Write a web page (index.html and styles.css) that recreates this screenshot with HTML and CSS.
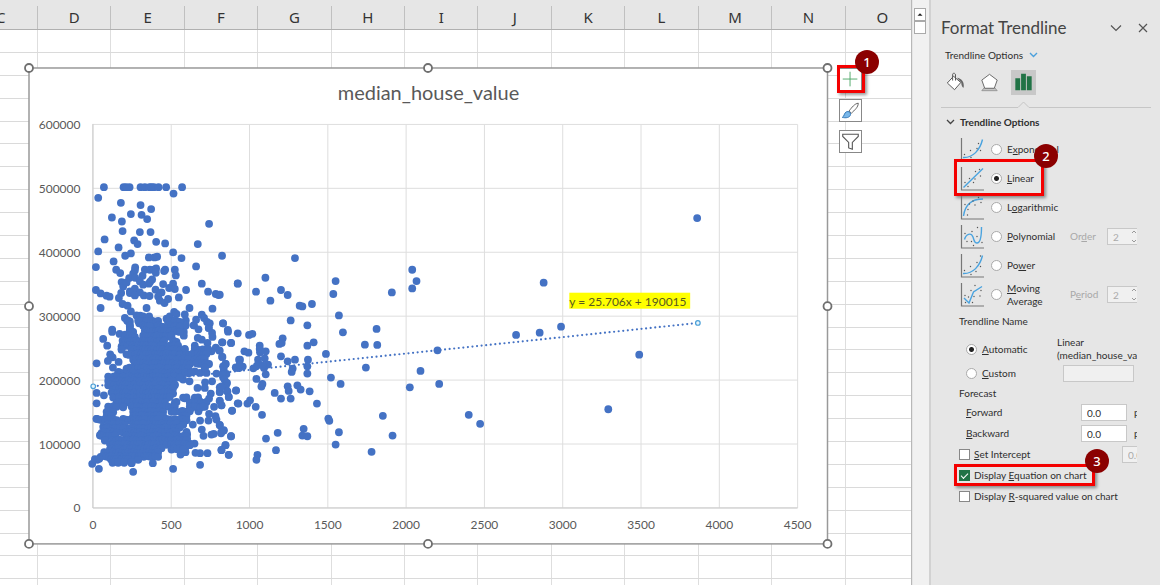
FILE: index.html
```html
<!DOCTYPE html>
<html lang="en">
<head>
<meta charset="utf-8">
<title>Format Trendline</title>
<link rel="stylesheet" href="styles.css">
</head>
<body>
<div class="app">
  <main class="sheet">
    <div class="col-heads">
      <span class="head head-first">C</span><span class="head">D</span><span class="head">E</span><span class="head">F</span><span class="head">G</span><span class="head">H</span><span class="head">I</span><span class="head">J</span><span class="head">K</span><span class="head">L</span><span class="head">M</span><span class="head">N</span><span class="head head-last">O</span>
    </div>
    <div class="cells" id="cells"></div>

    <svg class="chart" viewBox="24 63 810 487" role="img" aria-label="median_house_value scatter chart">
      <rect class="chart-frame" x="29" y="68" width="799.5" height="476.5"/>
      <g id="grid" class="chart-grid"></g>
      <path class="chart-axis" d="M93 124V508.5H798.5"/>
      <g id="labels" class="chart-label"></g>
      <text class="chart-title" x="429" y="100">median_house_value</text>
      <path class="trend" d="M93.3 386.7L698.7 323.3"/>
      <g id="dots" class="dots"></g>
      <circle class="trend-end" cx="93.3" cy="386.7" r="2.3"/>
      <circle class="trend-end" cx="698.7" cy="323.3" r="2.3"/>
      <rect class="equation-bg" x="570" y="293" width="121" height="16"/>
      <text class="equation" x="570" y="306">y = 25.706x + 190015</text>
      <g class="handles">
        <circle cx="29" cy="68" r="4"/><circle cx="428.5" cy="68" r="4"/><circle cx="828.5" cy="68" r="4"/>
        <circle cx="29" cy="306.5" r="4"/><circle cx="828.5" cy="306.5" r="4"/>
        <circle cx="29" cy="544.5" r="4"/><circle cx="428.5" cy="544.5" r="4"/><circle cx="828.5" cy="544.5" r="4"/>
      </g>
    </svg>

    <div class="chart-tools">
      <div class="tool-slot">
        <button class="tool" type="button" aria-label="Chart Elements">
          <svg viewBox="0 0 23 23"><path d="M11 3V19M3 11H19" stroke="#4aa564" fill="none"/></svg>
        </button>
        <span class="callout callout-one"><b class="badge">1</b></span>
      </div>
      <button class="tool" type="button" aria-label="Chart Styles">
        <svg viewBox="0 0 23 23"><path d="M10 12C13 8 16 4 20 3.500C20 8 16 11 12.500 14.500Z" fill="#fff" stroke="#555"/><path d="M2.500 19C5 18 4 14.500 7 13C9 12 12 13 11.500 16C11 19.500 6 20 2.500 19Z" fill="#7ab8ea" stroke="#2a6fb0"/></svg>
      </button>
      <button class="tool" type="button" aria-label="Chart Filters">
        <svg viewBox="0 0 23 23"><path d="M3 3.500H20V6L13.500 12.500V20L9.500 18.500V12.500L3 6Z" fill="#fff" stroke="#555" stroke-width="1.200"/></svg>
      </button>
    </div>
  </main>

  <div class="scroll">
    <button class="scroll-up" type="button" aria-label="Scroll up"><svg viewBox="0 0 12 12"><path d="M3 7.500L6 4.500L9 7.500Z" fill="#222"/></svg></button>
    <div class="scroll-thumb"></div>
  </div>

  <aside class="pane">
    <header class="pane-head">
      <h1 class="pane-title">Format Trendline</h1>
      <button class="plain" type="button" aria-label="Pane options"><svg width="12" height="12" viewBox="0 0 12 12"><path d="M1 3.500L6 8.500L11 3.500" fill="none" stroke="#555" stroke-width="1.200"/></svg></button>
      <button class="plain" type="button" aria-label="Close"><svg width="10" height="10" viewBox="0 0 10 10"><path d="M1 1L9 9M9 1L1 9" fill="none" stroke="#555" stroke-width="1.200"/></svg></button>
    </header>
    <button class="plain pane-menu" type="button">Trendline Options
      <svg width="9" height="6" viewBox="0 0 9 6"><path d="M1 1L4.500 4.500L8 1" fill="none" stroke="#4ba0dc" stroke-width="1.400"/></svg>
    </button>
    <nav class="tabs">
      <button class="tab" type="button" aria-label="Fill and Line"><svg viewBox="0 0 26 26"><path d="M4.500 13.500L11 6.500L18.500 13L12 20.500Z" fill="#fff" stroke="#555"/><path d="M10 11V4.500C10 3 13 3 13 5V11" fill="none" stroke="#555"/><path d="M14.500 8C19 8.500 22.500 12 21.500 18.500C20 18 19 16 19 13Z" fill="#666"/></svg></button>
      <button class="tab" type="button" aria-label="Effects"><svg viewBox="0 0 26 26"><path d="M7.500 18.500L5 21.500H21L18.500 18.500Z" fill="#c4c4c4" stroke="#888" stroke-width=".8"/><path d="M13 4.500L21 10.500L18 19H8L5 10.500Z" fill="#fff" stroke="#666"/></svg></button>
      <button class="tab tab-on" type="button" aria-label="Trendline Options"><svg viewBox="0 0 26 26"><path d="M4.500 8.500H9.500V21H4.500ZM10.500 4H15.500V21H10.500ZM16.500 6.500H21.500V21H16.500Z" fill="#217346"/></svg></button>
    </nav>
    <svg class="tab-rule" viewBox="0 0 210 8"><path d="M0 6.500H77L82.500 1L88 6.500H210" fill="none" stroke="#c6c6c6"/></svg>

    <form class="form">
      <h2 class="section"><svg width="9" height="6" viewBox="0 0 9 6"><path d="M1 1L4.500 4.500L8 1" fill="none" stroke="#444" stroke-width="1.300"/></svg>Trendline Options</h2>

      <div class="option">
        <svg class="kind" viewBox="0 0 24 24"><path class="kind-axis" d="M1.500 0V23H24"/><path class="kind-line" d="M3 19.500C13 20 20 12 22.500 1.500"/><path class="kind-dots" d="M4.500 16.500h0M10.500 12.500h0M17 10.500h0M18.500 5.500h0M11 19.500h0M20.500 12.500h0"/></svg>
        <input class="radio" type="radio" name="kind" id="k1"><label for="k1">E<u>x</u>ponential</label>
      </div>
      <div class="option">
        <svg class="kind" viewBox="0 0 24 24"><path class="kind-axis" d="M1.500 0V23H24"/><path class="kind-line" d="M3.500 20.500L23 1.500"/><path class="kind-dots" d="M5 15.500h0M9.500 11.500h0M15.500 4.500h0M19.500 2.500h0M8 19.500h0M13.500 15.500h0M15 12h0M20.500 9h0"/></svg>
        <input class="radio" type="radio" name="kind" id="k2" checked><label for="k2"><u>L</u>inear</label>
        <span class="callout callout-two"><b class="badge">2</b></span>
      </div>
      <div class="option">
        <svg class="kind" viewBox="0 0 24 24"><path class="kind-axis" d="M1.500 0V23H24"/><path class="kind-line" d="M3.500 20C5 9 11 3 23 3"/><path class="kind-dots" d="M5 8.500h0M9.500 8h0M8 13.500h0M7.500 19h0M13 5h0M15 9h0M18.500 1.500h0M21 6.500h0"/></svg>
        <input class="radio" type="radio" name="kind" id="k3"><label for="k3">L<u>o</u>garithmic</label>
      </div>
      <div class="option">
        <svg class="kind" viewBox="0 0 24 24"><path class="kind-axis" d="M1.500 0V23H24"/><path class="kind-line" d="M4.500 14.500C6 9 11 7 13 12C14.500 16 14 18 17 18C20.500 18 21.500 10 21.500 2"/><path class="kind-dots" d="M5 8.500h0M12 6.500h0M17.500 2.500h0M17 11.500h0M7 16.500h0M11.500 16.500h0M13.500 20.500h0M22 17.500h0"/></svg>
        <input class="radio" type="radio" name="kind" id="k4"><label for="k4"><u>P</u>olynomial</label>
        <label class="side off" for="order">Or<u>d</u>er</label>
        <span class="spin"><input class="box" id="order" value="2" disabled><svg width="6" height="15" viewBox="0 0 6 15"><path d="M1 4L3 2L5 4M1 11L3 13L5 11" fill="none" stroke="#999"/></svg></span>
      </div>
      <div class="option">
        <svg class="kind" viewBox="0 0 24 24"><path class="kind-axis" d="M1.500 0V23H24"/><path class="kind-line" d="M3 19.500C13 20 20 12 22.500 1.500"/><path class="kind-dots" d="M4.500 16.500h0M10.500 12.500h0M17 8.500h0M20.500 2h0M11 20.500h0M16 17.500h0M20.500 12.500h0"/></svg>
        <input class="radio" type="radio" name="kind" id="k5"><label for="k5">Po<u>w</u>er</label>
      </div>
      <div class="option">
        <svg class="kind" viewBox="0 0 24 24"><path class="kind-axis" d="M1.500 0V23H24"/><path class="kind-line" d="M4 15L9 20L13.500 9L22 3.500"/><path class="kind-dots" d="M5 12.500h0M8.500 14h0M11 7.500h0M15 2.500h0M21 7.500h0M5.500 19.500h0M12.500 19.500h0M14 13.500h0M20 13h0"/></svg>
        <input class="radio" type="radio" name="kind" id="k6"><label for="k6"><u>M</u>oving<br>Average</label>
        <label class="side off" for="period">P<u>e</u>riod</label>
        <span class="spin"><input class="box" id="period" value="2" disabled><svg width="6" height="15" viewBox="0 0 6 15"><path d="M1 4L3 2L5 4M1 11L3 13L5 11" fill="none" stroke="#999"/></svg></span>
      </div>

      <h3 class="group">Trendline Name</h3>
      <div class="name-row name-auto">
        <input class="radio" type="radio" name="tname" id="auto" checked><label for="auto"><u>A</u>utomatic</label>
        <span class="auto-name">Linear<br>(median_house_va</span>
      </div>
      <div class="name-row">
        <input class="radio" type="radio" name="tname" id="custom"><label for="custom"><u>C</u>ustom</label>
        <input class="box custom-box" aria-label="Custom name" disabled>
      </div>

      <h3 class="group group-low">Forecast</h3>
      <div class="line indent"><label for="fwd"><u>F</u>orward</label><input class="box num" id="fwd" value="0.0"><span class="unit">periods</span></div>
      <div class="line indent"><label for="bwd"><u>B</u>ackward</label><input class="box num" id="bwd" value="0.0"><span class="unit">periods</span></div>
      <div class="line"><input class="check" type="checkbox" id="c1"><label for="c1"><u>S</u>et Intercept</label><input class="box intercept" aria-label="Intercept" value="0.0" disabled></div>
      <div class="line"><input class="check" type="checkbox" id="c2" checked><label for="c2">Display <u>E</u>quation on chart</label><span class="callout callout-three"><b class="badge">3</b></span></div>
      <div class="line"><input class="check" type="checkbox" id="c3"><label for="c3">Display <u>R</u>-squared value on chart</label></div>
    </form>
  </aside>
</div>
<script src="chart.js"></script>
</body>
</html>
```

FILE: styles.css
```css
* { box-sizing: border-box; }
body { margin: 0; font-family: Lato, "Noto Sans", sans-serif; color: #2e2e2e; background: #e6e6e6; }
button, input { font: inherit; color: inherit; }
.app { display: flex; min-height: 100vh; overflow: hidden; }

/* worksheet */
.sheet { position: relative; flex: 1; display: flex; flex-direction: column; min-width: 0; border-right: 1px solid #b8b8b8; background: #fff; }
.col-heads, .row { display: grid; grid-template-columns: 76fr repeat(11, 147fr) 131fr; }
.col-heads { height: 30px; padding-top: 6px; background: #e6e6e6; border-bottom: 1px solid #b0b0b0; font-family: "Noto Sans", sans-serif; }
.head { display: flex; align-items: center; justify-content: center; font-size: 15px; line-height: 20px; padding-bottom: 2px; color: #333; border-right: 1px solid #c0c0c0; }
.head-first { justify-content: flex-start; overflow: hidden; text-indent: -4px; }
.head-last { border-right: 0; padding-left: 8px; }
.cells { flex: 1; display: flex; flex-direction: column; overflow: hidden; }
.row { flex: 23; border-bottom: 1px solid #dadada; }
.row:last-child { flex: 6; border-bottom: 0; }
.row i { border-right: 1px solid #dedede; }
.row i:last-child { border-right: 0; }

/* chart */
.chart { position: absolute; left: 24px; top: 63px; width: calc(100% - 102px); }
.chart-frame { fill: #fff; stroke: #999; stroke-width: 1.5; }
.chart-grid { stroke: #dedede; fill: none; }
.chart-axis { stroke: #cacaca; fill: none; }
.chart-label { font-size: 12px; fill: #595959; }
.chart-label .x { text-anchor: middle; }
.chart-label .y { text-anchor: end; }
.chart-title { font-size: 20px; fill: #595959; text-anchor: middle; }
.dots { fill: #4472c4; }
.trend { stroke: #4472c4; stroke-width: 2.2; stroke-linecap: round; stroke-dasharray: 0 4.6; }
.trend-end { fill: #e8f5fb; stroke: #4a9fd8; stroke-width: 1.2; }
.equation-bg { fill: #ff0; }
.equation { font-size: 12px; fill: #595920; }
.handles { fill: #fff; stroke: #6f6f6f; stroke-width: 1.8; }
.chart-tools { position: absolute; right: 49px; top: 68px; display: flex; flex-direction: column; gap: 8px; }
.tool-slot { position: relative; display: flex; }
.tool { width: 23px; height: 23px; padding: 0; border: 1px solid #888; background: #fff; }
.tool svg { display: block; width: 21px; height: 21px; }

/* numbered callouts */
.callout { position: absolute; border: 3px solid #f40000; box-shadow: 2px 2px 3px rgba(0, 0, 0, .4); pointer-events: none; }
.callout-one { left: -2px; top: -3px; width: 28px; height: 28px; }
.callout-two { left: 14px; top: -5px; width: 90px; height: 37px; }
.callout-three { left: 14px; top: -1px; width: 141px; height: 22px; z-index: 1; }
.badge { position: absolute; right: -17px; top: -18px; width: 24px; height: 24px; border-radius: 50%; background: #8b0000; color: #fff; font-family: "Noto Sans", sans-serif; font-size: 13px; font-weight: 500; line-height: 24px; text-align: center; }

/* scroll bar */
.scroll { width: 17px; padding: 8px 2px 0 1px; background: #f1f1f1; border-left: 1px solid #e6e6e6; }
.scroll-up { display: block; width: 12px; height: 13px; padding: 0; border: 1px solid #aaa; background: #fff; }
.scroll-up svg { display: block; width: 10px; height: 11px; }
.scroll-thumb { width: 12px; height: 13px; border: 1px solid #aaa; background: #fff; }

/* task pane */
.pane { width: 231px; padding: 15px 9px 0 10px; border-left: 2px solid #d2d2d2; font-size: 10px; line-height: 13px; }
.plain { padding: 0; border: 0; background: none; }
.plain svg { display: block; }
.pane-head { display: flex; align-items: center; gap: 16px; height: 26px; padding-right: 3px; }
.pane-title { flex: 1; margin: 0; font-size: 17px; font-weight: 400; line-height: 26px; white-space: nowrap; color: #444; }
.pane-menu { display: flex; align-items: center; gap: 6px; height: 14px; margin: 7px 0 0 4px; }
.tabs { display: flex; gap: 9px; margin-top: 8px; padding-left: 2px; }
.tab { width: 25px; height: 25px; padding: 0; border: 0; background: none; }
.tab svg { display: block; width: 25px; height: 25px; }
.tab-on { background: #c8c8c8; }
.tab-rule { display: block; width: 100%; margin-top: 6px; }
.form { margin: 0 14px 0 -1px; overflow: hidden; }
.section { display: flex; align-items: center; gap: 5px; height: 26px; margin: 0; padding-left: 6px; font-size: 10px; font-weight: 700; }
.option { position: relative; display: flex; align-items: center; height: 29px; padding-left: 20px; }
.kind { width: 24px; height: 24px; margin-right: 7px; }
.kind-axis { fill: none; stroke: #777; stroke-width: 1.2; }
.kind-line { fill: none; stroke: #4aa3df; stroke-width: 1.4; }
.kind-dots { fill: none; stroke: #555; stroke-width: 1.4; stroke-linecap: round; }
.radio { appearance: none; flex: none; width: 11px; height: 11px; margin: 0 5px 0 0; border: 1px solid #aaa; border-radius: 50%; background: #fff; }
.radio:checked { background: radial-gradient(circle, #222 2px, #fff 3px); }
.side { position: absolute; left: 130px; }
.off { color: #a8a8a8; }
.spin { position: absolute; left: 167px; display: flex; }
.spin svg { position: absolute; left: 24px; top: 1px; }
.spin .box { width: 34px; }
.box { height: 17px; padding: 0 5px; border: 1px solid #c8c8c8; border-radius: 0; background: #fff; }
.box:disabled { background: #f0f0f0; color: #aaa; }
.group { height: 24px; margin: 0; padding: 6px 0 0 19px; font-size: 10px; font-weight: 400; }
.name-row { display: flex; align-items: center; height: 16px; padding-left: 26px; }
.name-auto { height: 32px; }
.name-row label { flex: none; width: 75px; }
.auto-name { white-space: nowrap; }
.custom-box { width: 71px; margin-left: 6px; }
.group-low { height: 21px; }
.line { position: relative; display: flex; align-items: center; height: 21px; padding-left: 19px; white-space: nowrap; }
.indent { padding-left: 26px; }
.indent label { flex: none; width: 115px; }
.num { flex: none; width: 46px; }
.unit { margin-left: 7px; }
.check { appearance: none; flex: none; width: 11px; height: 11px; margin: 0 4px 0 0; border: 1px solid #888; background: #fff; }
.check:checked { border-color: #217346; background: #217346; }
.check:checked::after { content: ""; display: block; width: 6px; height: 3px; margin: 2px 0 0 1px; border: solid #fff; border-width: 0 0 1px 1px; transform: rotate(-45deg); }
.intercept { position: absolute; left: 182px; width: 46px; }
```

FILE: chart.js
```js
const NS = "http://www.w3.org/2000/svg";

function add(parent, tag, attrs, text) {
  const el = document.createElementNS(NS, tag);
  for (const k in attrs) el.setAttribute(k, attrs[k]);
  if (text) el.textContent = text;
  parent.appendChild(el);
}

// empty worksheet rows
const cells = document.getElementById("cells");
for (let r = 0; r < 25; r++) {
  const row = document.createElement("div");
  row.className = "row";
  row.innerHTML = "<i></i>".repeat(13);
  cells.appendChild(row);
}

const grid = document.getElementById("grid");
const labels = document.getElementById("labels");
for (let i = 0; i <= 9; i++) {
  const x = 93 + i * 78.4;
  add(grid, "path", { d: `M${x} 124.5V508.5` });
  add(labels, "text", { x, y: 530, class: "x" }, String(i * 500));
}
for (let i = 0; i <= 6; i++) {
  const y = 508.5 - i * 64;
  add(grid, "path", { d: `M93 ${y}H798.5` });
  add(labels, "text", { x: 80.5, y: y + 4.5, class: "y" }, String(i * 100000));
}

// each block: origin, then points in thirds of a unit
const blocks = [
  [80, 170, `72,52 131,52 139,52 149,52 182,52 195,52 209,52 215,52 222,52 236,52 259,52 307,52 281,71 55,84 123,99 182,106 214,118 153,133 185,135 96,143 126,155 202,148 128,184 180,187 212,187 388,162 74,209 163,212 173,223 229,216 256,221 354,223 116,233 55,245 136,258 153,251 207,263 224,263 232,261 280,248 305,265 427,258 101,275 48,292 349,290 109,300 121,310 166,293 165,302 160,312 195,300 210,300 222,300 229,296 228,309 256,300 253,304 285,300 288,317 148,325 166,324 188,318 217,329 125,337 180,335 190,345 207,342 211,336 130,350 140,338 250,343 280,342 366,342 474,342 48,361 62,371 80,378 89,381 124,370 117,385 150,365 165,357 180,368 150,370 165,377 192,377 209,379 227,360 245,368 235,380 240,393 254,400 265,388 268,355 285,358 319,361 385,366 408,373 416,376 297,383 128,403 143,408 153,425 200,415 62,415 329,415 398,417 135,445 142,453 149,462 150,478 170,437 181,438 190,440 208,440 178,461 190,455 200,465 215,470 229,458 240,470 260,447 270,440 283,427 290,433 315,434 318,452 285,452 298,463 317,468 262,472 275,458 366,435 373,445 349,450 342,467 382,457 390,461 387,475 430,461 97,480 444,481`],
  [80, 320, `97,37 119,43 136,45 70,58 82,78 50,131 91,104 98,113 84,124 116,127 99,144 116,157 50,220 72,227 50,251 50,298 70,322 60,347 37,433 57,448 160,457 280,448 361,436 155,431 219,431 302,405 317,398 427,68 454,70 354,55 366,60 383,70 397,40 398,52 387,25 342,17 356,29 312,37 312,48 318,15 345,78 408,84 418,92 395,95 427,112 437,133 432,148 388,133 470,145 478,120 430,160 410,162 397,185 376,188 360,160 380,160 345,155 310,180 329,185 353,205 375,205 393,222 388,237 420,203 420,217 443,215 439,190 430,173 447,232 469,212 420,243 425,257 403,262 474,251 457,273 360,245 375,262 356,275 330,270 388,283 407,290 386,303 361,303 410,300 339,315 366,330 371,349 395,345 402,343 420,317 432,333 424,341 454,350 437,377 425,391 447,406 383,401 361,401 347,400 344,372 322,345 322,358 330,372 316,388`],
  [220, 220, `0,225 54,191 137,174 109,216 152,243 226,115 184,211 204,226 240,258 248,260 277,253 213,302 263,317 348,184 341,223 358,287 370,338 517,218 578,150 591,184 578,206 471,328 436,375 473,376 439,444 571,503 10,311 25,336 54,341 88,346 98,343 8,368 34,370 0,393 8,412 18,433 10,440 120,378 120,388 121,398 138,395 74,395 86,399 61,420 48,443 58,445 69,441 60,435 115,420 135,416 117,433 101,446 112,438 133,445 145,435 138,464 130,438 189,356 186,370 179,373 263,378 282,368 184,410 204,425 226,420 219,447 216,457 265,420 263,440 263,462 319,403 334,474 363,493 110,478 128,493 125,501 49,513 20,463 10,465 14,480 22,490 18,500 22,515 27,532 0,517 5,500 56,552 83,552 91,542 108,562 165,520 184,537 213,537 204,500 207,514 233,497 243,510 270,515 292,552 37,574 127,586 0,545 5,557 0,616 12,632 5,637 34,650 17,677 5,692 27,706 139,657 174,640 169,692 113,706 110,721 252,628 248,648 263,650 326,597 329,604 358,638 348,675 490,589 519,648 456,697`],
  [400, 200, `894,55 433,249 350,406 421,399 485,381 720,465 627,629 63,514 119,553 208,646 242,673 114,452`]
];

// crowded part of the cloud: row, then the runs filled in that row
const runs = `5:145-150,175-200,215-235,265,285-300|20:150,190-210,235-250,265-300|35:150-160,195-270,285-300|50:150-165,190-275|65:128-240,252,280-290|78:125-225,240-250,265-295|90:125,155-300,315,345-385|104:140-285,300,320-380|118:160-325,345-375|132:165-330,350-385|146:140-265,285-325,375|160:115-335|172:85-255,265-300|184:85-240,255-280|196:85-225,240-265,285|208:100-245,260-280|220:95-250,265-280|234:100-270,310-320,345-355|248:110-255,285-290,330-380|262:85-110,130,155-285,330-370|276:80-100,160-250,275-285,300-330|288:80-95,160-250,310-320|300:50-110,130-195,215-235,260-320|314:85-135,160-190,210-290,310|326:75-130,150-190,205-300|338:65-110,130-190,210-290,320|350:62-105,140-265,285-320|362:75,100-265,275-320|375:90-260,275-330|388:90-245,275-310|400:73-235|411:62-235|419:45-58,93-110,125-145,175|428:98-105,115,133,155`;

const dots = document.getElementById("dots");
const dot = (cx, cy) => add(dots, "circle", { cx: cx.toFixed(1), cy: cy.toFixed(1), r: 3.9 });

for (const [ox, oy, list] of blocks) {
  for (const p of list.split(" ")) {
    const [x, y] = p.split(",").map(Number);
    dot(ox + x / 3, oy + y / 3);
  }
}
for (const row of runs.split("|")) {
  const [y, spans] = row.split(":");
  for (const span of spans.split(",")) {
    const [a, b = a] = span.split("-").map(Number);
    const n = Math.max(1, Math.ceil((b - a) / 9));
    for (let i = 0; i <= n; i++) {
      const wobble = ((i * 7 + y * 3) % 5) - 2;
      dot(80 + (a + (b - a) * i / n) / 3, 320 + (Number(y) + wobble) / 3);
    }
  }
}
```
